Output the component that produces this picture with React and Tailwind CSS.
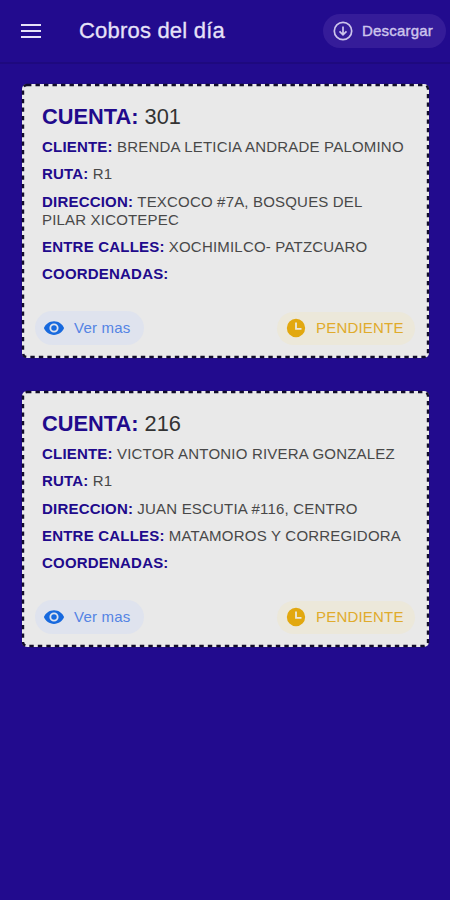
import React from "react";

const cards = [
  {
    cuenta: "301",
    height: "h-[274px]",
    rows: [
      ["CLIENTE:", "BRENDA LETICIA ANDRADE PALOMINO", "tracking-[0.2px]"],
      ["RUTA:", "R1", "tracking-[0.2px]"],
      ["DIRECCION:", "TEXCOCO #7A, BOSQUES DEL PILAR XICOTEPEC", "tracking-[0.18px]"],
      ["ENTRE CALLES:", "XOCHIMILCO- PATZCUARO", "tracking-[0.2px]"],
      ["COORDENADAS:", "", ""],
    ],
  },
  {
    cuenta: "216",
    height: "h-[256px]",
    rows: [
      ["CLIENTE:", "VICTOR ANTONIO RIVERA GONZALEZ", "tracking-[0.2px]"],
      ["RUTA:", "R1", "tracking-[0.2px]"],
      ["DIRECCION:", "JUAN ESCUTIA #116, CENTRO", "tracking-[0.19px]"],
      ["ENTRE CALLES:", "MATAMOROS Y CORREGIDORA", "tracking-[0.22px]"],
      ["COORDENADAS:", "", ""],
    ],
  },
];

function Card({ cuenta, rows, height }) {
  return (
    <article
      className={`relative flex flex-col justify-between rounded-[5px] bg-[#e9e9e9] pt-[18px] pr-[14px] pb-[13px] pl-[20px] ${height}`}
    >
      <svg className="pointer-events-none absolute inset-0 h-full w-full overflow-visible p-px" fill="none">
        <rect width="100%" height="100%" rx="4" stroke="#120d2b" strokeWidth="2.4" strokeDasharray="4.4 4.1" />
      </svg>
      <div className="pr-[8px]">
        <h2 className="text-[21.8px] leading-[29px] text-[#333]">
          <b className="text-[#210a8c]">CUENTA:</b> {cuenta}
        </h2>
        <div className="mt-[7px] flex flex-col gap-[9px] text-[15px] leading-[18.3px] text-[#484848]">
          {rows.map(([label, value, tracking]) => (
            <p key={label}>
              <b className="tracking-[0.2px] text-[#210a8c]">{label}</b>{" "}
              <span className={tracking}>{value}</span>
            </p>
          ))}
        </div>
      </div>
      <div className="-ml-[7px] flex items-center justify-between">
        <button className="flex h-[34px] w-[109px] items-center rounded-full bg-[#dfe3ee] pl-2 text-[15px] tracking-[0.2px] text-[#5484e4]">
          <svg className="mr-[9px] size-[22px]" viewBox="0 0 24 24" fill="#1769de">
            <path d="M12 4.5C7 4.5 2.73 7.61 1 12c1.73 4.39 6 7.5 11 7.5s9.27-3.11 11-7.5c-1.73-4.39-6-7.5-11-7.5zM12 17a5 5 0 1 1 0-10 5 5 0 0 1 0 10zm0-8a3 3 0 1 0 0 6 3 3 0 0 0 0-6z" />
          </svg>
          Ver mas
        </button>
        <span className="flex h-[33px] w-[138px] items-center rounded-full bg-[#ece8da] pl-2 text-[15px] tracking-[0.2px] text-[#e0ab2c]">
          <svg className="mr-[9px] size-[22px]" viewBox="0 0 24 24" fill="#e2a80f">
            <path fillRule="evenodd" d="M12 2a10 10 0 1 0 0 20 10 10 0 0 0 0-20zM11 6h2v6h5v2h-7z" />
          </svg>
          PENDIENTE
        </span>
      </div>
    </article>
  );
}

export default function App() {
  return (
    <div className="min-h-[900px] w-[450px] bg-[#220b8e] font-['Liberation_Sans',sans-serif]">
      <header className="flex h-[64px] items-center border-b-2 border-[#1e097f] pr-[4px] pl-[21px] text-[#e6e2f8]">
        <button aria-label="Menu" className="flex w-[20px] flex-col gap-[4px]">
          <span className="h-[2px] bg-[#e6e2f8]" />
          <span className="h-[2px] bg-[#e6e2f8]" />
          <span className="h-[2px] bg-[#e6e2f8]" />
        </button>
        <h1 className="ml-[38px] text-[22px] leading-[28px] tracking-[0.2px] [-webkit-text-stroke:0.3px_#e6e2f8]">
          Cobros del día
        </h1>
        <button className="ml-auto flex h-[34px] w-[123px] items-center rounded-full bg-[#351c99] pl-[10px] text-[15px] tracking-[0.2px] text-[#cdc5ec] [-webkit-text-stroke:0.4px_#cdc5ec]">
          <svg className="mr-[9px] size-[20px]" viewBox="0 0 20 20" fill="none" stroke="#cdc5ec" strokeWidth="1.7">
            <circle cx="10" cy="10" r="8.7" />
            <path d="M10 5.5v8M6.5 10.3l3.5 3.5 3.5-3.5" />
          </svg>
          Descargar
        </button>
      </header>
      <main className="flex flex-col gap-[33px] pt-[20px] pr-[21px] pl-[22px]">
        {cards.map((card) => (
          <Card key={card.cuenta} {...card} />
        ))}
      </main>
    </div>
  );
}
